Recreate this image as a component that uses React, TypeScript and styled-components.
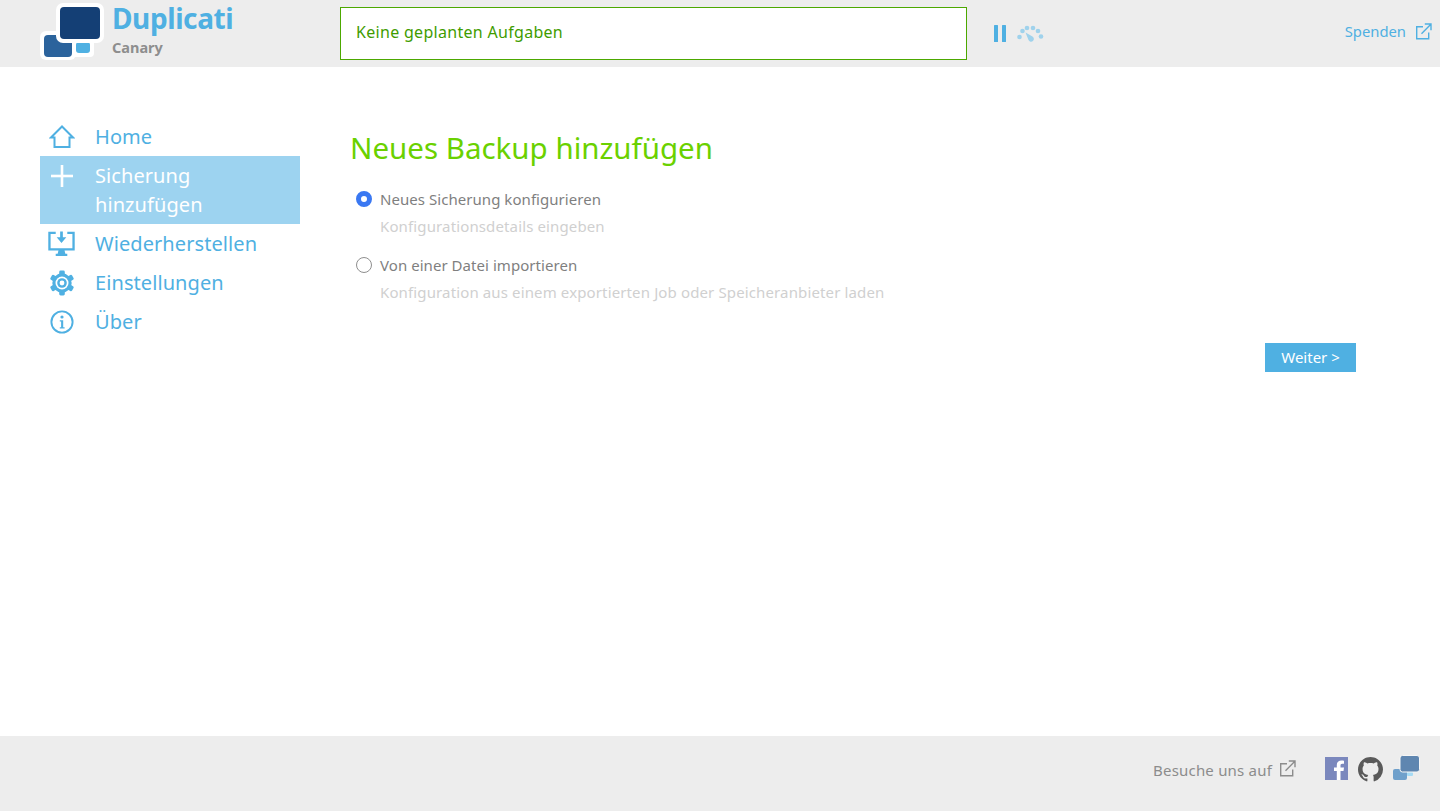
import React from "react";
import styled, { createGlobalStyle } from "styled-components";

const GlobalStyle = createGlobalStyle`
  html, body { margin: 0; padding: 0; height: 100%; background: #fff; }
  body { font-family: "Noto Sans", "Open Sans", sans-serif; }
  #root { height: 100%; }
`;

const Page = styled.div`
  height: 811px;
  display: flex;
  flex-direction: column;
  overflow: hidden;
`;

const Header = styled.header`
  height: 67px;
  background: #ededed;
  display: flex;
  align-items: flex-start;
  box-sizing: border-box;
  padding-left: 40px;
`;

const Brand = styled.div`
  width: 300px;
  display: flex;
  gap: 8px;
`;

const BrandText = styled.div`
  display: flex;
  flex-direction: column;
`;

const BrandName = styled.div`
  font-size: 28px;
  line-height: 36px;
  font-weight: 700;
  letter-spacing: -0.4px;
  color: #4fb0e2;
`;

const BrandSub = styled.div`
  font-size: 14.5px;
  line-height: 18px;
  margin-top: 2px;
  font-weight: 700;
  color: #8e8e8e;
`;

const StatusBox = styled.div`
  width: 627px;
  height: 53px;
  margin-top: 7px;
  box-sizing: border-box;
  border: 1px solid #4ca800;
  background: #fff;
  color: #3f9c00;
  font-size: 16px;
  letter-spacing: 0.3px;
  line-height: 49px;
  padding-left: 15px;
`;

const Controls = styled.div`
  display: flex;
  align-items: center;
  gap: 11px;
  margin: 25px 0 0 26px;
`;

const DonateLink = styled.a`
  margin: 19px 8px 0 auto;
  display: flex;
  align-items: center;
  gap: 9px;
  font-size: 14.8px;
  line-height: 24px;
  color: #4fb0e2;
`;

const Main = styled.main`
  flex: 1;
  display: flex;
  padding: 50px 84px 0 40px;
`;

const Sidebar = styled.nav`
  width: 260px;
  flex: none;
  font-size: 20px;
  letter-spacing: 0.08px;
  line-height: 29px;
`;

const MenuItem = styled.div<{ $active?: boolean }>`
  display: flex;
  padding: 5px 10px 5px 8px;
  color: ${(p) => (p.$active ? "#fff" : "#4fb0e2")};
  background: ${(p) => (p.$active ? "#9dd3f0" : "transparent")};
`;

const MenuIcon = styled.span`
  width: 27px;
  height: 29px;
  margin-right: 20px;
  flex: none;
  display: flex;
  align-items: center;
  justify-content: center;
`;

const Content = styled.section`
  flex: 1;
  margin-left: 50px;
`;

const Title = styled.h1`
  margin: 12px 0 0;
  font-size: 29.5px;
  line-height: 38px;
  font-weight: 400;
  color: #6ad100;
`;

const Option = styled.div`
  display: grid;
  grid-template-columns: 16px 1fr;
  column-gap: 8px;
  align-items: center;
  margin-left: 6px;
  margin-top: 22px;
  & + & { margin-top: 19px; }
`;

const Radio = styled.span<{ $checked?: boolean }>`
  width: 16px;
  height: 16px;
  box-sizing: border-box;
  border-radius: 50%;
  border: ${(p) => (p.$checked ? "5.5px solid #3a78f2" : "1px solid #8f8f8f")};
  background: #fff;
`;

const OptionLabel = styled.div`
  font-size: 15px;
  letter-spacing: 0.05px;
  line-height: 20px;
  color: #7f7f7f;
`;

const OptionHint = styled.div`
  grid-column: 2;
  margin-top: 7px;
  font-size: 15px;
  letter-spacing: 0.13px;
  line-height: 20px;
  color: #d0d0d0;
`;

const Actions = styled.div`
  display: flex;
  justify-content: flex-end;
  margin-top: 41px;
`;

const NextButton = styled.button`
  width: 91px;
  height: 29px;
  border: 0;
  padding: 0 0 2px;
  background: #4fb0e2;
  color: #fff;
  font: 15px "Noto Sans", sans-serif;
`;

const Footer = styled.footer`
  height: 75px;
  background: #ededed;
  display: flex;
  align-items: flex-start;
  justify-content: flex-end;
  padding: 19px 20px 0 0;
  box-sizing: border-box;
`;

const VisitText = styled.div`
  display: flex;
  align-items: center;
  gap: 7px;
  margin-right: 29px;
  font-size: 15px;
  letter-spacing: 0.2px;
  line-height: 30px;
  color: #8c8c8c;
  svg { margin-bottom: 4px; }
`;

const SocialIcons = styled.div`
  display: flex;
  align-items: flex-start;
  gap: 10px;
  margin-top: 2px;
  svg:last-child { margin-top: -2px; }
`;

const ExternalIcon = ({ color }: { color: string }) => (
  <svg width="17" height="17" viewBox="0 0 17 17" fill="none" stroke={color} strokeWidth="1.4">
    <path d="M8 3.7H1.7v12h12V9.5" />
    <path d="M6.5 10.7 15.6 1.6M9.800 1h6.200v6.200" />
  </svg>
);

const Logo = () => (
  <svg width="64" height="60" viewBox="0 0 64 60">
    <rect x="0" y="31" width="36" height="29" rx="6" fill="#fff" />
    <rect x="4" y="35" width="28" height="22" rx="4" fill="#2b639c" />
    <rect x="32" y="38" width="22" height="19" rx="4" fill="#fff" />
    <rect x="36" y="42" width="14" height="11" rx="3" fill="#4fb0e2" />
    <rect x="16" y="3" width="48" height="40" rx="7" fill="#fff" />
    <rect x="20" y="7" width="40" height="32" rx="4" fill="#143f75" />
  </svg>
);

const PauseIcon = () => (
  <svg width="13" height="17" viewBox="0 0 13 17" fill="#4fb0e2">
    <rect x="1" y="0" width="4" height="17" rx="0.5" />
    <rect x="9" y="0" width="4" height="17" rx="0.5" />
  </svg>
);

const SpeedIcon = () => (
  <svg width="27" height="17" viewBox="0 0 27 17" fill="#9fd2ec">
    <circle cx="2.500" cy="12" r="2.300" />
    <circle cx="5.500" cy="6" r="2.300" />
    <circle cx="10" cy="3" r="2.300" />
    <circle cx="16" cy="3" r="2.300" />
    <circle cx="21" cy="6" r="2.300" />
    <circle cx="24" cy="11.500" r="2.300" />
    <path d="M8.500 7.500 15.500 11.500a2.800 2.800 0 1 1-4 3.500z" />
  </svg>
);

const HomeIcon = () => (
  <svg width="26" height="24" viewBox="0 0 26 24" fill="none" stroke="#4fb0e2" strokeWidth="2">
    <path d="M2 12.500 13 1.500l11 11h-3.500v9.500h-15v-9.500z" />
  </svg>
);

const PlusIcon = () => (
  <svg width="22" height="22" viewBox="0 0 22 22" fill="#fff">
    <rect x="0" y="9.700" width="22" height="2.600" />
    <rect x="9.700" y="0" width="2.600" height="22" />
  </svg>
);

const RestoreIcon = () => (
  <svg width="28" height="26" viewBox="0 0 28 26" fill="none">
    <path d="M8 1.500H1.500v17h25v-17H20" stroke="#4fb0e2" strokeWidth="2.400" />
    <path d="M12.600 0h2.800v6h3.600L14 12 9 6h3.600z" fill="#4fb0e2" />
    <path d="M11 19h6l1 4h2v2.500H8V23h2z" fill="#4fb0e2" />
  </svg>
);

const GearIcon = () => (
  <svg width="26" height="26" viewBox="0 0 26 26">
    <g fill="#4fb0e2">
      {[0, 60, 120, 180, 240, 300].map((deg) => (
        <rect key={deg} x="10.200" y="0.500" width="5.600" height="6" rx="1.400" transform={`rotate(${deg} 13 13)`} />
      ))}
    </g>
    <circle cx="13" cy="13" r="9.700" fill="#4fb0e2" />
    <circle cx="13" cy="13" r="6.500" fill="#fff" />
    <circle cx="13" cy="13" r="4.800" fill="#4fb0e2" />
    <circle cx="13" cy="13" r="2.400" fill="#fff" />
  </svg>
);

const InfoIcon = () => (
  <svg width="24" height="24" viewBox="0 0 24 24" fill="none">
    <circle cx="12" cy="12" r="10.600" stroke="#4fb0e2" strokeWidth="1.900" />
    <circle cx="12" cy="7" r="1.600" fill="#4fb0e2" />
    <path d="M9.800 10.200h3.400v7h1.400v1.200H9.800v-1.200h1.300v-5.800H9.800z" fill="#4fb0e2" />
  </svg>
);

const FacebookIcon = () => (
  <svg width="23" height="23" viewBox="0 0 23 23">
    <rect width="23" height="23" fill="#7b88bd" />
    <path d="M15.500 23v-9h3l.5-3.500h-3.500V8.500c0-1 .4-1.700 1.800-1.700H19V3.700c-.4 0-1.500-.2-2.700-.2-2.700 0-4.500 1.600-4.500 4.600v2.400H9V14h2.800v9z" fill="#fff" />
  </svg>
);

const GithubIcon = () => (
  <svg width="25" height="25" viewBox="0 0 16 16" fill="#5a5a5a">
    <path d="M8 0C3.580 0 0 3.580 0 8c0 3.540 2.290 6.530 5.470 7.590.4.070.55-.170.55-.380 0-.190-.010-.820-.010-1.490-2.010.370-2.530-.490-2.690-.940-.090-.230-.480-.940-.820-1.130-.280-.150-.680-.520-.010-.530.630-.010 1.080.580 1.230.820.720 1.210 1.870.870 2.330.660.070-.520.280-.870.510-1.070-1.780-.200-3.640-.890-3.640-3.950 0-.870.310-1.590.820-2.150-.080-.200-.360-1.020.080-2.120 0 0 .670-.210 2.200.820.640-.180 1.320-.270 2-.270s1.360.090 2 .270c1.530-1.040 2.200-.820 2.200-.820.440 1.100.160 1.920.080 2.120.510.560.820 1.270.820 2.150 0 3.070-1.870 3.750-3.650 3.950.290.250.540.730.540 1.480 0 1.070-.010 1.930-.010 2.200 0 .210.150.460.550.380A8.010 8.010 0 0 0 16 8c0-4.420-3.580-8-8-8z" />
  </svg>
);

const SmallLogo = () => (
  <svg width="27" height="26" viewBox="0 0 27 26">
    <rect x="0" y="14" width="14" height="11" rx="2" fill="#6fa0cb" />
    <rect x="14" y="17" width="6" height="4" rx="1" fill="#a6dbf5" />
    <rect x="7" y="0.500" width="19.500" height="16.500" rx="2.500" fill="#5f86b0" stroke="#f6f6f6" strokeWidth="1" />
  </svg>
);

export default function App() {
  return (
    <Page>
      <GlobalStyle />
      <Header>
        <Brand>
          <Logo />
          <BrandText>
            <BrandName>Duplicati</BrandName>
            <BrandSub>Canary</BrandSub>
          </BrandText>
        </Brand>
        <StatusBox>Keine geplanten Aufgaben</StatusBox>
        <Controls>
          <PauseIcon />
          <SpeedIcon />
        </Controls>
        <DonateLink>
          Spenden
          <ExternalIcon color="#4fb0e2" />
        </DonateLink>
      </Header>
      <Main>
        <Sidebar>
          <MenuItem>
            <MenuIcon><HomeIcon /></MenuIcon>
            Home
          </MenuItem>
          <MenuItem $active>
            <MenuIcon><PlusIcon /></MenuIcon>
            <span>Sicherung<br />hinzufügen</span>
          </MenuItem>
          <MenuItem>
            <MenuIcon><RestoreIcon /></MenuIcon>
            Wiederherstellen
          </MenuItem>
          <MenuItem>
            <MenuIcon><GearIcon /></MenuIcon>
            Einstellungen
          </MenuItem>
          <MenuItem>
            <MenuIcon><InfoIcon /></MenuIcon>
            Über
          </MenuItem>
        </Sidebar>
        <Content>
          <Title>Neues Backup hinzufügen</Title>
          <Option>
            <Radio $checked />
            <OptionLabel>Neues Sicherung konfigurieren</OptionLabel>
            <OptionHint>Konfigurationsdetails eingeben</OptionHint>
          </Option>
          <Option>
            <Radio />
            <OptionLabel>Von einer Datei importieren</OptionLabel>
            <OptionHint>Konfiguration aus einem exportierten Job oder Speicheranbieter laden</OptionHint>
          </Option>
          <Actions>
            <NextButton>Weiter &gt;</NextButton>
          </Actions>
        </Content>
      </Main>
      <Footer>
        <VisitText>
          Besuche uns auf
          <ExternalIcon color="#8c8c8c" />
        </VisitText>
        <SocialIcons>
          <FacebookIcon />
          <GithubIcon />
          <SmallLogo />
        </SocialIcons>
      </Footer>
    </Page>
  );
}
